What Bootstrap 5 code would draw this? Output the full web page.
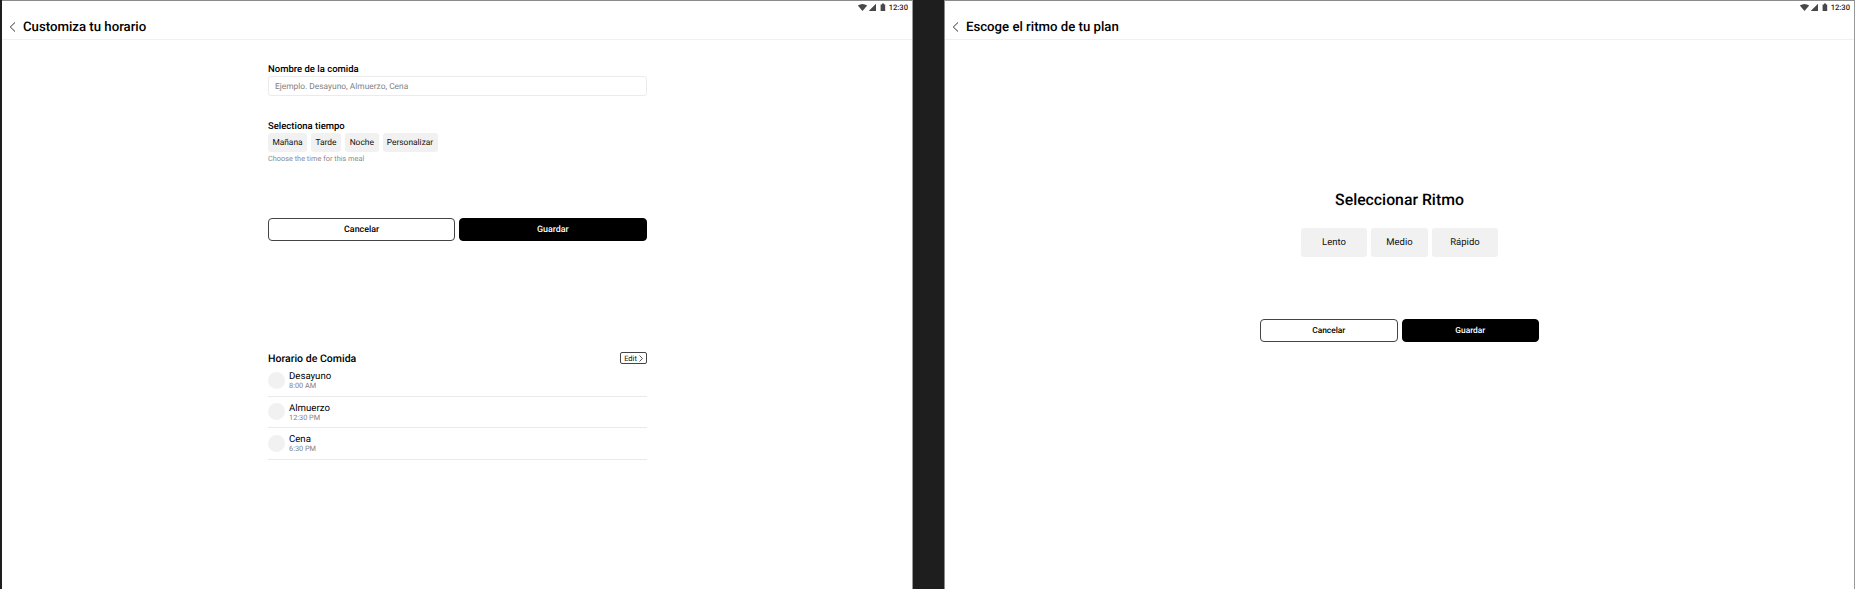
<!DOCTYPE html>
<html lang="es">
<head>
<meta charset="utf-8">
<meta name="viewport" content="width=device-width, initial-scale=1">
<title>Horario y ritmo del plan</title>
<link href="https://cdn.jsdelivr.net/npm/bootstrap@5.3.0/dist/css/bootstrap.min.css" rel="stylesheet">
<style>
body{font-family:Roboto,"Liberation Sans",sans-serif;background:#1e1e1e;color:#000;height:589px;overflow:hidden;line-height:1;text-rendering:geometricPrecision}
.btn,.form-control{text-rendering:geometricPrecision}
.screen{width:911px;height:589px;background:#fff;border-top:1px solid #8a8a8a;border-right:1px solid #999}
.canvas{padding-left:2px;gap:31px}
.canvas .screen+.screen{border-left:1px solid #8a8a8a}
.topbar{height:39px;border-bottom:1px solid #f0f0f0}
.status{height:12px;padding:0 4px 0 0;font-size:7.6px;font-weight:500;color:#222}
.status span{padding-top:1px}
.status svg{display:block;margin-right:3px}
.title-row{height:27px;padding-left:7px}
.title-row h1{font-size:13.2px;font-weight:500;margin:0 0 0 7px;padding-top:2px;line-height:27px}
.form-col{width:378.5px;margin-left:266px;padding-top:23px}
.field-label{font-size:9.5px;font-weight:500;line-height:13px;height:13px;display:block}
.time-label{margin-top:24px}
.form-control.meal{font-size:8.4px;height:20px;min-height:0;padding:1px 6px 0;border:1px solid #ebebeb;border-radius:3px;line-height:17px}
.form-control.meal::placeholder{color:#828282}
.chip{font-size:8.4px;height:19px;background:#f1f1f1;border:0;border-radius:3px;padding:1px 0 0;line-height:18px;color:#111}
.chip-manana{width:39px}.chip-tarde{width:30px}.chip-noche{width:33.5px}.chip-custom{width:55px}
.hint{font-size:7.35px;color:#8a8a8a;line-height:13px}
.form-actions{margin-top:53px}
.act{height:23px;padding:1px 0 0;font-size:8.9px;font-weight:500;line-height:20px;border-radius:4px;border:1px solid #444;flex:1;background:#fff;color:#000}
.act.dark{background:#000;border-color:#000;color:#fff}
.edit{font-size:7.5px;height:12px;width:27px;padding:1px 0 0 1px;line-height:9px;border:1px solid #444;border-radius:2px;color:#111;background:#fff}
.edit svg{margin-left:2px}
.meals-head{margin-top:111px;margin-bottom:1px}
.meals-title{font-size:10.55px;font-weight:500;margin:0;padding-top:1px;line-height:11px}
.meal-row{height:31.6px;border-bottom:1px solid #e9e9e9}
.dot{width:17px;height:17px;border-radius:50%;background:#f1f1f1}
.meal-name{font-size:9.65px;line-height:11px;padding-top:1px}
.meal-time{font-size:7.35px;line-height:8px;color:#828282}
.pace-body{padding-top:150px}
.pace-title{font-size:15.8px;font-weight:500;line-height:20px;margin:0 0 18px}
.pace{height:29px;font-size:9.5px;line-height:28px;width:66px}
.pace-mid{width:57px}
.pace-actions{width:279px;margin-top:62px}
.pace-actions .act{font-size:8.4px}
</style>
</head>
<body>
<div class="canvas d-flex">
  <main class="screen flex-shrink-0">
    <header class="topbar">
      <div class="status d-flex justify-content-end align-items-center">
        <svg width="29" height="10" viewBox="0 0 29 10" fill="#484848"><path d="M5.5 9 .8 3.6Q5.5 .2 10.2 3.6ZM11.7 9 19 1.7V9ZM23.6 2.4H25V1.5h2v.9h1.2V9h-4.6Z"/></svg><span>12:30</span>
      </div>
      <div class="title-row d-flex align-items-center">
        <svg width="7" height="10" viewBox="0 0 7 10" fill="none" stroke="#333"><path d="M6 .5 1.3 5 6 9.5"/></svg>
        <h1>Customiza tu horario</h1>
      </div>
    </header>
    <div class="form-col">
      <label class="field-label" for="meal">Nombre de la comida</label>
      <input id="meal" class="form-control meal" placeholder="Ejemplo. Desayuno, Almuerzo, Cena">
      <span class="field-label time-label">Selectiona tiempo</span>
      <div class="d-flex gap-1">
        <button class="btn chip chip-manana">Mañana</button>
        <button class="btn chip chip-tarde">Tarde</button>
        <button class="btn chip chip-noche">Noche</button>
        <button class="btn chip chip-custom">Personalizar</button>
      </div>
      <div class="hint">Choose the time for this meal</div>
      <div class="form-actions d-flex gap-1">
        <button class="btn act">Cancelar</button>
        <button class="btn act dark">Guardar</button>
      </div>
      <div class="meals-head d-flex justify-content-between align-items-center">
        <h2 class="meals-title">Horario de Comida</h2>
        <button class="btn edit d-flex align-items-center justify-content-center">Edit<svg width="4" height="7" viewBox="0 0 4 7" fill="none" stroke="#222" stroke-width=".8"><path d="M.5.5 3.4 3.5.5 6.5"/></svg></button>
      </div>
      <div class="meal-row d-flex align-items-center gap-1"><span class="dot"></span><div><div class="meal-name">Desayuno</div><div class="meal-time">8:00 AM</div></div></div>
      <div class="meal-row d-flex align-items-center gap-1"><span class="dot"></span><div><div class="meal-name">Almuerzo</div><div class="meal-time">12:30 PM</div></div></div>
      <div class="meal-row d-flex align-items-center gap-1"><span class="dot"></span><div><div class="meal-name">Cena</div><div class="meal-time">6:30 PM</div></div></div>
    </div>
  </main>
  <main class="screen flex-shrink-0">
    <header class="topbar">
      <div class="status d-flex justify-content-end align-items-center">
        <svg width="29" height="10" viewBox="0 0 29 10" fill="#484848"><path d="M5.5 9 .8 3.6Q5.5 .2 10.2 3.6ZM11.7 9 19 1.7V9ZM23.6 2.4H25V1.5h2v.9h1.2V9h-4.6Z"/></svg><span>12:30</span>
      </div>
      <div class="title-row d-flex align-items-center">
        <svg width="7" height="10" viewBox="0 0 7 10" fill="none" stroke="#333"><path d="M6 .5 1.3 5 6 9.5"/></svg>
        <h1>Escoge el ritmo de tu plan</h1>
      </div>
    </header>
    <div class="pace-body d-flex flex-column align-items-center">
      <h2 class="pace-title">Seleccionar Ritmo</h2>
      <div class="d-flex gap-1">
        <button class="btn chip pace">Lento</button>
        <button class="btn chip pace pace-mid">Medio</button>
        <button class="btn chip pace">Rápido</button>
      </div>
      <div class="pace-actions d-flex gap-1">
        <button class="btn act">Cancelar</button>
        <button class="btn act dark">Guardar</button>
      </div>
    </div>
  </main>
</div>
<script src="https://cdn.jsdelivr.net/npm/bootstrap@5.3.0/dist/js/bootstrap.bundle.min.js"></script>
</body>
</html>
